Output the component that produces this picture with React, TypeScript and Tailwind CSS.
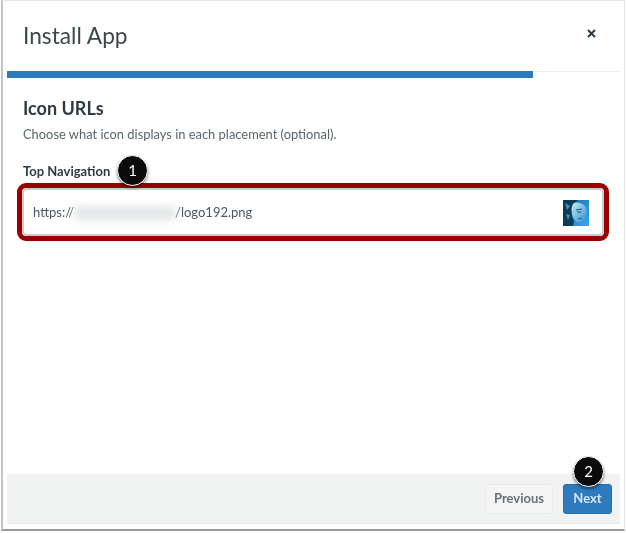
export default function App() {
  return (
    <div className="w-[626px] h-[533px] bg-white overflow-hidden relative blur-[0.35px]" style={{ fontFamily: "Lato, 'Noto Sans', sans-serif" }}>
      <div className="h-[531px] w-[624px] ml-px bg-white border-l-2 border-r border-b-2 border-t border-l-[#c4c4c4] border-r-[#e4e4e4] border-b-[#9a9a9a] border-t-[#e6e6e6] flex flex-col pl-[4px] pr-[4px] pb-[5px]">
        <div className="h-[70px] shrink-0 flex items-center justify-between pl-[16px] pr-[24px] pb-[1px]">
          <div className="text-[22.7px] leading-[30px] text-[#3b4850] font-normal">Install App</div>
          <svg width="9" height="9" viewBox="0 0 9 9" className="mt-[-4px]">
            <path d="M1 1L8 8M8 1L1 8" stroke="#2d3b45" strokeWidth="2" />
          </svg>
        </div>
        <div className="h-[6px] shrink-0 border-t border-[#eceef0] relative">
          <div className="absolute left-0 top-[-1px] h-[7px] w-[526px] bg-[#2d7bbd]" />
        </div>
        <div className="flex-1 flex flex-col pl-[16px] pr-[16px]">
          <div className="mt-[19px] text-[18px] leading-[24px] font-bold text-[#2d3b45]">Icon URLs</div>
          <div className="mt-[5px] text-[12.9px] leading-[18px] text-[#5a666e]">Choose what icon displays in each placement (optional).</div>
          <div className="mt-[19px] text-[13px] leading-[18px] font-bold text-[#2d3b45]">Top Navigation</div>
          <div className="mt-[3px] ml-[-6px] w-[592px] h-[58px] shrink-0 border-[5px] border-[#990000] rounded-[9px] bg-white">
            <div className="h-full border-2 border-[#c7cdd1] rounded-[5px] flex items-center pl-[9px] pr-[13px] pt-[1px] text-[13px] text-[#4a5861]">
              <span>https://</span>
              <span className="w-[101px] h-[14px] bg-[#e3e5e6] blur-[4px] shrink-0" />
              <span>/logo192.png</span>
              <svg width="26" height="26" viewBox="0 0 26 26" className="ml-auto">
                <defs>
                  <linearGradient id="bg" x1="0" y1="0" x2="1" y2="1">
                    <stop offset="0" stopColor="#1d6ea3" />
                    <stop offset="1" stopColor="#35a7ec" />
                  </linearGradient>
                  <linearGradient id="face" x1="0" y1="0" x2="1" y2="1">
                    <stop offset="0" stopColor="#cbeaf8" />
                    <stop offset="1" stopColor="#2d8ecb" />
                  </linearGradient>
                </defs>
                <rect width="26" height="26" fill="url(#bg)" />
                <path d="M0 0H15L10 4L8 10L9 16L11 21L10 26H0Z" fill="#0f3a56" />
                <path d="M2 3L7 6L4 10ZM3 14L7 15L5 20Z" fill="#3a93c8" />
                <path d="M11 3C17 1 24 5 24 12C24 15 22 18 20 20C18 23 15 23 13 21C10 18 9 16 9 12C8 8 9 5 11 3Z" fill="url(#face)" />
                <path d="M13 10L19 9M14 12L18 12M15 19L19 18" stroke="#145a80" strokeWidth="1" fill="none" />
              </svg>
            </div>
          </div>
        </div>
        <div className="h-[50px] shrink-0 bg-[#f1f2f2] border-b border-[#e4e6e7] flex items-center justify-end gap-[10px] pr-[8px]">
          <div className="w-[68px] h-[30px] rounded-[3px] bg-[#f5f5f5] border border-[#e8eaeb] flex items-center justify-center text-[13px] font-bold text-[#66727a]">Previous</div>
          <div className="w-[49px] h-[30px] rounded-[3px] bg-[#2d7bbd] border border-[#2a6fa9] flex items-center justify-center text-[13px] font-bold text-[#d4e6f4]">Next</div>
        </div>
      </div>
      <div className="absolute left-[117px] top-[155px] w-[31px] h-[31px] rounded-full bg-[#0b0b0b] border border-white shadow-[0_2px_3px_rgba(0,0,0,0.45)] flex items-center justify-center text-[15px] text-white">1</div>
      <div className="absolute left-[573px] top-[456px] w-[31px] h-[31px] rounded-full bg-[#0b0b0b] border border-white shadow-[0_2px_3px_rgba(0,0,0,0.45)] flex items-center justify-center text-[15px] text-white">2</div>
    </div>
  );
}
